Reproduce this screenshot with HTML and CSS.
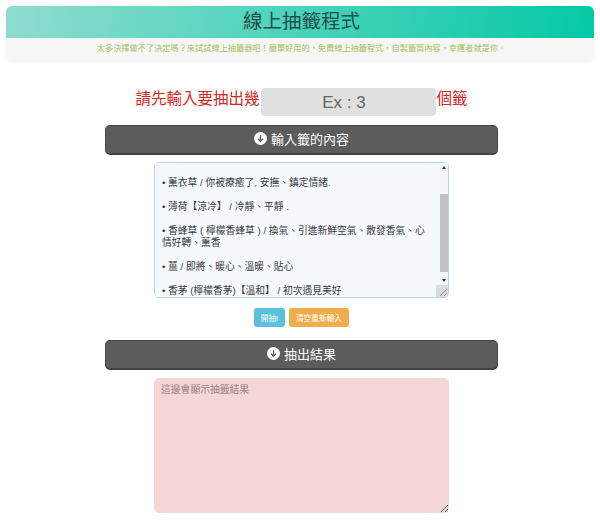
FILE: index.html
```html
<!DOCTYPE html>
<html lang="zh-Hant">
<head>
    <meta charset="UTF-8">
    <meta name="viewport" content="width=device-width, initial-scale=1.0">
    <title>線上抽籤程式</title>
    <link rel="stylesheet" href="styles.css">
</head>
<body>
    <header class="hero">
        <h1>線上抽籤程式</h1>
        <p>太多決擇做不了決定嗎？來試試線上抽籤器吧！簡單好用的，免費線上抽籤程式，自製籤筒內容，幸運者就是你。</p>
    </header>

    <main class="content">
        <div class="count-row">
            <span>請先輸入要抽出幾</span>
            <input class="count-input" type="text" placeholder="Ex : 3">
            <span>個籤</span>
        </div>

        <div class="bar">
            <svg class="bar-icon" viewBox="0 0 12 12"><circle cx="6" cy="6" r="6" fill="#fff"/><path d="M6 3v5.4M3.7 6.2L6 8.5l2.3-2.3" fill="none" stroke="#5c5c5c" stroke-width="1.2"/></svg>
            輸入籤的內容
        </div>

        <div class="items-box">
            <textarea id="items" class="items" spellcheck="false">• 佛手柑 / 開心、快樂、放鬆

• 薰衣草 / 你被療癒了, 安撫、鎮定情緒.

• 薄荷【涼冷】 / 冷靜、平靜 .

• 香蜂草 ( 檸檬香蜂草 ) / 換氣、引進新鮮空氣、散發香氣、心情好轉、薰香

• 薑 / 即將、暖心、溫暖、貼心

• 香茅 (檸檬香茅)【溫和】 / 初次遇見美好

• 茶樹 / 淨化、清新</textarea>
            <div class="scrollbar">
                <span class="arrow arrow-up"></span>
                <div class="track"><div class="thumb"></div></div>
                <span class="arrow arrow-down"></span>
                <svg class="grip" viewBox="0 0 12 12"><path d="M4 11L11 4M8 11l3-3" stroke="#888" stroke-width="1" fill="none"/></svg>
            </div>
        </div>

        <div class="actions">
            <button class="btn btn-start">開抽!</button>
            <button class="btn btn-clear">清空重新輸入</button>
        </div>

        <div class="bar">
            <svg class="bar-icon" viewBox="0 0 12 12"><circle cx="6" cy="6" r="6" fill="#fff"/><path d="M6 3v5.4M3.7 6.2L6 8.5l2.3-2.3" fill="none" stroke="#5c5c5c" stroke-width="1.2"/></svg>
            抽出結果
        </div>

        <textarea class="result" placeholder="這邊會顯示抽籤結果"></textarea>
    </main>

    <script>
        document.getElementById('items').scrollTop = 14;
    </script>
</body>
</html>
```

FILE: styles.css
```css
body {
    margin: 0;
    padding: 6px 6px 0;
    background-color: #ffffff;
    font-family: "Liberation Sans", "Noto Sans CJK TC", sans-serif;
    color: #333;
}
.hero {
    border-radius: 6px;
    background-color: #f6f6f6;
    box-shadow: 0 1px 3px rgba(0, 0, 0, 0.05);
    text-align: center;
}
.hero h1 {
    margin: 0;
    height: 32px;
    padding-left: 3px;
    border-radius: 6px 6px 0 0;
    background: linear-gradient(100deg, #8fdccf, #05c9a6);
    color: #1f4f4a;
    font-size: 19.5px;
    font-weight: 400;
    line-height: 30px;
}
.hero p {
    margin: 0;
    height: 23px;
    padding-left: 3px;
    color: #9fc25a;
    font-size: 8.2px;
    line-height: 22px;
}
.content {
    padding-left: 3px;
}
.count-row {
    display: flex;
    justify-content: center;
    align-items: flex-start;
    gap: 1px;
    margin-top: 27px;
    color: #d0281c;
    font-size: 15.5px;
    line-height: 21px;
}
.count-input {
    box-sizing: border-box;
    width: 175px;
    height: 28px;
    padding: 1px 8px 0 0;
    border: none;
    border-radius: 4px;
    background-color: #e0e0e0;
    font-family: inherit;
    font-size: 17px;
    text-align: center;
}
.count-input::placeholder {
    color: #666;
}
.bar {
    display: flex;
    justify-content: center;
    align-items: center;
    gap: 4px;
    box-sizing: border-box;
    width: 393px;
    height: 30px;
    margin: 9px auto 0;
    padding-bottom: 2px;
    border: 1px solid #444;
    border-bottom-width: 2px;
    border-radius: 5px;
    background-color: #5c5c5c;
    color: #ffffff;
    font-size: 13px;
}
.bar-icon {
    width: 13px;
    height: 13px;
}
textarea {
    display: block;
    box-sizing: border-box;
    width: 295px;
    height: 135px;
    font-family: inherit;
}
.items-box {
    position: relative;
    width: 295px;
    height: 136px;
    margin: 7px auto 0;
}
.items {
    height: 136px;
    padding: 4px 20px 0 7px;
    border: 1px solid #b5d4ee;
    border-radius: 5px;
    background-color: #f5f9fd;
    color: #3a3a3a;
    font-size: 9.75px;
    line-height: 12px;
    outline: none;
    resize: none;
}
.scrollbar {
    position: absolute;
    top: 1px;
    right: 1px;
    bottom: 1px;
    display: flex;
    flex-direction: column;
    width: 8px;
    border-radius: 0 4px 4px 0;
    background-color: #f3f5f7;
}
.arrow {
    flex: none;
    width: 0;
    height: 0;
    margin: 3px auto;
    border-left: 2px solid transparent;
    border-right: 2px solid transparent;
}
.arrow-up {
    border-bottom: 3px solid #333;
}
.arrow-down {
    border-top: 3px solid #333;
}
.track {
    flex: 1;
    padding-top: 22px;
}
.thumb {
    height: 78px;
    background-color: #c1c1c1;
}
.grip {
    flex: none;
    width: 12px;
    height: 12px;
    margin-left: -4px;
    background-color: #dcdcdc;
}
.actions {
    display: flex;
    justify-content: center;
    gap: 4px;
    margin-top: 10px;
}
.btn {
    height: 19px;
    padding: 0;
    border: 1px solid transparent;
    border-radius: 3px;
    color: #ffffff;
    font-family: inherit;
    font-size: 7.7px;
}
.btn-start {
    width: 31px;
    background-color: #5bc0de;
}
.btn-clear {
    width: 60px;
    background-color: #f0ad4e;
}
.actions + .bar {
    margin-top: 13px;
}
.result {
    margin: 8px auto 0;
    padding: 6px 7px;
    border: none;
    border-radius: 5px;
    background-color: #f3d6d5;
    font-size: 9.8px;
    line-height: 12px;
}
.result::placeholder {
    color: #9a8080;
}
```
